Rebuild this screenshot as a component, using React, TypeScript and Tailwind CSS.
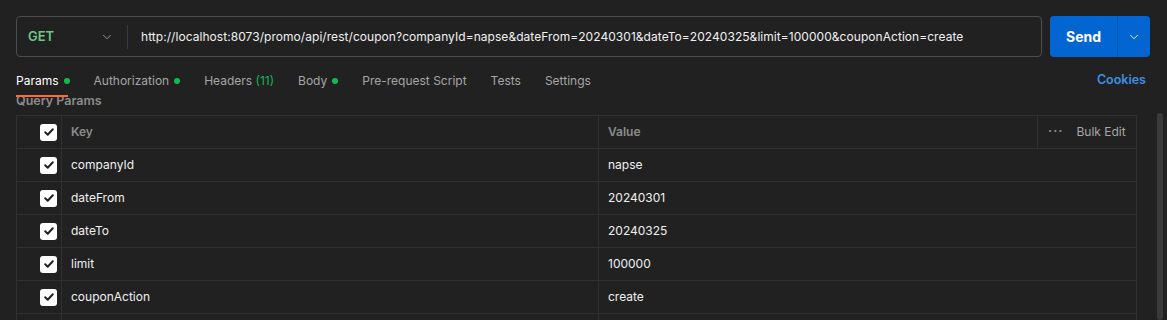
import { ChevronDown } from "lucide-react";

const url =
  "http://localhost:8073/promo/api/rest/coupon?companyId=napse&dateFrom=20240301&dateTo=20240325&limit=100000&couponAction=create";

const params = [
  { key: "companyId", value: "napse" },
  { key: "dateFrom", value: "20240301" },
  { key: "dateTo", value: "20240325" },
  { key: "limit", value: "100000" },
  { key: "couponAction", value: "create" },
];

function Check() {
  return (
    <div className="w-[17px] h-[17px] rounded-[3px] bg-white flex items-center justify-center">
      <svg width="12" height="12" viewBox="0 0 12 12" fill="none">
        <path d="M2.2 6.3 4.7 8.7 9.8 3.3" stroke="#212121" strokeWidth="2" strokeLinecap="round" strokeLinejoin="round" />
      </svg>
    </div>
  );
}

function Dot() {
  return <span className="inline-block w-[6px] h-[6px] rounded-full bg-[#0cbb52] ml-[5px]" />;
}

const tabs = [
  { label: "Params", dot: true, active: true },
  { label: "Authorization", dot: true },
  { label: "Headers", count: "(11)" },
  { label: "Body", dot: true },
  { label: "Pre-request Script" },
  { label: "Tests" },
  { label: "Settings" },
];

export default function App() {
  return (
    <div
      className="w-[1167px] h-[320px] bg-[#212121] overflow-hidden flex"
      style={{ fontFamily: "Inter, 'Noto Sans', sans-serif" }}
    >
      <div className="flex-1 pl-4 pr-[20px] pt-4">
        {/* request bar */}
        <div className="flex gap-2 h-[41px] -mr-[13px]">
          <div className="flex-1 flex items-center border border-[#4d4d4d] rounded-[4px]">
            <div className="w-[110px] flex items-center justify-between pl-[11px] pr-[13px] h-full">
              <span className="text-[13px] font-semibold text-[#6bc78a]">GET</span>
              <ChevronDown size={14} strokeWidth={1.5} className="text-[#a6a6a6]" />
            </div>
            <div className="w-px h-[24px] bg-[#3a3a3a]" />
            <span className="pl-[13px] text-[12px] text-[#f0f0f0] whitespace-nowrap tracking-[0.05px]">{url}</span>
          </div>
          <div className="w-[100px] flex rounded-[4px] bg-[#0265d2]">
            <div className="w-[67px] flex items-center justify-center text-[14px] font-bold text-white">Send</div>
            <div className="w-px bg-[#0152ad]" />
            <div className="flex-1 flex items-center justify-center">
              <ChevronDown size={14} strokeWidth={1.5} className="text-white" />
            </div>
          </div>
        </div>

        {/* tabs */}
        <div className="flex items-center justify-between h-[38px] pt-[9px] -mr-[9px]">
          <div className="flex gap-6">
            {tabs.map((t) => (
              <div key={t.label} className={`flex items-center text-[12px] ${t.active ? "text-white" : "text-[#a6a6a6]"}`}>
                <span>
                  {t.label}
                  {t.count && <span className="text-[#0cbb52]"> {t.count}</span>}
                </span>
                {t.dot && <Dot />}
              </div>
            ))}
          </div>
          <span className="text-[12.5px] font-semibold text-[#3d8fe6]">Cookies</span>
        </div>
        <div className="relative">
          <div className="absolute left-0 top-0 w-[52px] h-[2px] bg-[#ff6c37]" />
          <div className="text-[12.5px] leading-[12px] font-semibold text-[#8c8c8c]">Query Params</div>
        </div>

        {/* table */}
        <div className="mt-[8px] border-l border-r border-t border-[#303030]">
          <div className="flex h-[33px] border-b border-[#303030] text-[12px] font-semibold text-[#8c8c8c]">
            <div className="w-[45px] border-r border-[#303030] flex items-center justify-end pr-[4px]">
              <Check />
            </div>
            <div className="w-[537px] border-r border-[#303030] flex items-center pl-[9px]">Key</div>
            <div className="w-[439px] border-r border-[#303030] flex items-center pl-[9px]">Value</div>
            <div className="flex-1 flex items-center pl-[10px] gap-[13px]">
              <span className="text-[#8c8c8c] tracking-[1px] text-[13px] leading-none -mt-[4px]">···</span>
              <span className="font-normal text-[#a6a6a6]">Bulk Edit</span>
            </div>
          </div>
          {params.map((p) => (
            <div key={p.key} className="flex h-[33px] border-b border-[#303030] text-[12px] text-[#f0f0f0]">
              <div className="w-[45px] border-r border-[#303030] flex items-center justify-end pr-[4px]">
                <Check />
              </div>
              <div className="w-[537px] border-r border-[#303030] flex items-center pl-[9px]">{p.key}</div>
              <div className="flex-1 flex items-center pl-[9px]">{p.value}</div>
            </div>
          ))}
          <div className="flex h-[33px]">
            <div className="w-[45px] border-r border-[#303030]" />
            <div className="w-[537px] border-r border-[#303030]" />
          </div>
        </div>
      </div>
      {/* scrollbar */}
      <div className="w-[10px] pt-[113px] pr-[4px]">
        <div className="w-[6px] h-full rounded-full bg-[#3a3a3a]" />
      </div>
    </div>
  );
}
